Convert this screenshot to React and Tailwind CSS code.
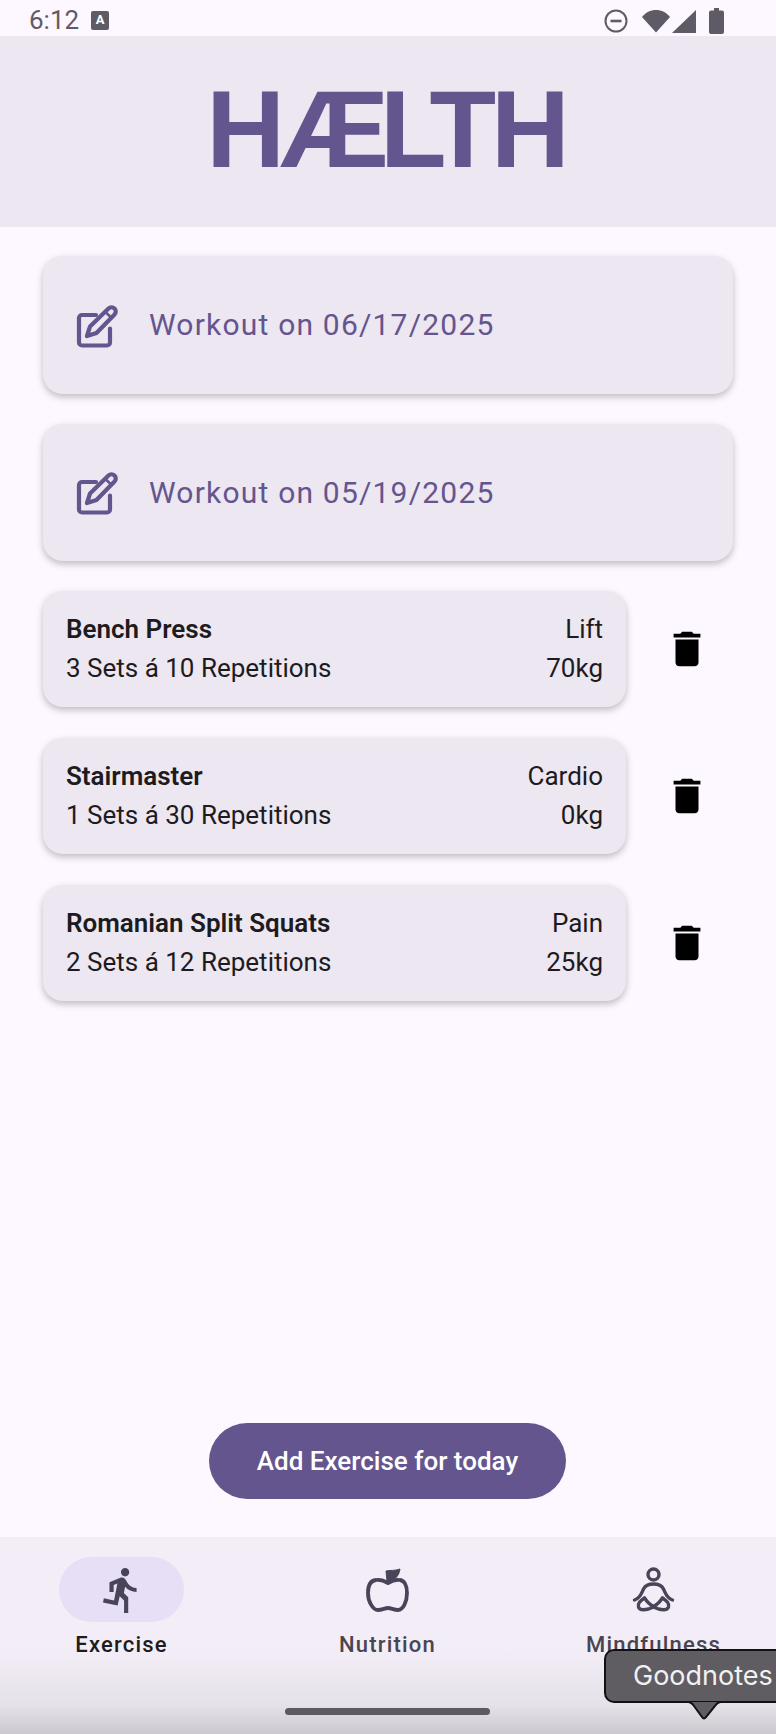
const WORKOUTS = ["Workout on 06/17/2025", "Workout on 05/19/2025"];

const EXERCISES = [
  { name: "Bench Press", type: "Lift", sets: "3 Sets á 10 Repetitions", weight: "70kg" },
  { name: "Stairmaster", type: "Cardio", sets: "1 Sets á 30 Repetitions", weight: "0kg" },
  { name: "Romanian Split Squats", type: "Pain", sets: "2 Sets á 12 Repetitions", weight: "25kg" },
];

function StatusBar() {
  return (
    <div className="h-[36px] shrink-0 pt-[5px] flex items-center justify-between pl-[29px] pr-[52px] text-[#5f5b66]">
      <div className="flex items-center gap-[12px]">
        <span className="text-[26px] leading-[31px]">6:12</span>
        <span className="w-[18px] h-[19px] rounded-[2px] bg-[#5f5b66] text-white text-[13px] leading-[17px] font-bold text-center">A</span>
      </div>
      <div className="flex items-center">
        <svg width="24" height="24" viewBox="0 0 24 24" fill="none" stroke="currentColor" strokeWidth="2">
          <circle cx="12" cy="12" r="10.5" />
          <path d="M6.5 12h11" strokeWidth="2.6" />
        </svg>
        <svg className="ml-[14px]" width="28" height="24" viewBox="0 0 28 24" fill="currentColor">
          <path d="M14 23.5 0 8C3.5 3.5 8.5 1 14 1s10.500 2.500 14 7z" />
        </svg>
        <svg className="ml-[2px]" width="24" height="24" viewBox="0 0 24 24" fill="currentColor">
          <path d="M24 1v23H0z" />
        </svg>
        <svg className="ml-[13px]" width="15" height="26" viewBox="0 0 15 26" fill="currentColor">
          <path d="M5 0h5v2.500h3a2 2 0 0 1 2 2V24a2 2 0 0 1-2 2H2a2 2 0 0 1-2-2V4.500a2 2 0 0 1 2-2h3z" />
        </svg>
      </div>
    </div>
  );
}

function EditIcon() {
  return (
    <svg className="shrink-0" width="60" height="60" viewBox="0 -1.500 60 60" fill="none" stroke="#65558f" strokeWidth="4.200" strokeLinejoin="round" strokeLinecap="round">
      <path d="M29 18.500H15a3 3 0 0 0-3 3V46a3 3 0 0 0 3 3h25a3 3 0 0 0 3-3V32" />
      <path d="M20 39.500 23 30 41.500 12a4 4 0 0 1 6 6L29.500 36.500z" />
      <path d="M38.500 15.500l5.500 5.500" strokeWidth="2.500" />
    </svg>
  );
}

function TrashIcon() {
  return (
    <svg width="46" height="46" viewBox="0 0 24 24" fill="#000">
      <path d="M6 19c0 1.100.9 2 2 2h8c1.100 0 2-.9 2-2V7H6v12zM19 4h-3.500l-1-1h-5l-1 1H5v2h14V4z" />
    </svg>
  );
}

function RunIcon() {
  return (
    <svg width="50" height="50" viewBox="0 0 24 24" fill="#4a4459">
      <path d="M13.490 5.480c1.100 0 2-.9 2-2s-.9-2-2-2-2 .9-2 2 .9 2 2 2zm-3.600 13.900l1-4.400 2.100 2v6h2v-7.500l-2.100-2 .6-3c1.300 1.500 3.300 2.500 5.500 2.500v-2c-1.900 0-3.500-1-4.300-2.400l-1-1.600c-.4-.6-1-1-1.700-1-.3 0-.5.1-.8.1l-5.200 2.200v4.700h2v-3.400l1.800-.7-1.600 8.100-4.900-1-.4 2 7 1.400z" />
    </svg>
  );
}

function AppleIcon() {
  return (
    <svg width="70" height="60" viewBox="3 0 70 60" fill="none" stroke="#4a4459" strokeWidth="3.800" strokeLinejoin="round">
      <path d="M38 23C33 20 29 19.500 26 20 21 20.500 18 25 18 33 18 42 23 50 28 50 32 50 35 48 38 48 41 48 44 50 48 50 53 50 57 42 57 33 57 25 54 20.500 50 20 47 19.500 43 20 38 23Z" />
      <path d="M36 11 37 21C43 22 49 17 50 9 45 11 40 10 36 11Z" fill="#4a4459" strokeWidth="1" />
    </svg>
  );
}

function MeditateIcon() {
  return (
    <svg width="70" height="60" viewBox="-1.500 0 70 60" fill="none" stroke="#4a4459" strokeWidth="3.400" strokeLinecap="round" strokeLinejoin="round">
      <circle cx="33" cy="14.500" r="5.500" />
      <path d="M14 40C20 38 21 33 23 29 25 25 29 24 33 24 37 24 41 25 43 29 45 33 46 38 52 40" />
      <path d="M24 38C20 41 17 43 18 47 19 50 24 50 28 49 34 47 38 44 42 38" />
      <path d="M42 38C46 41 49 43 48 47 47 50 42 50 38 49 32 47 28 44 24 38" />
    </svg>
  );
}

function NavItem({ icon, label, active }) {
  return (
    <div className="w-[125px] flex flex-col items-center">
      <div className={`w-[125px] h-[65px] rounded-full flex items-center justify-center ${active ? "bg-[#e6dff6]" : ""}`}>
        {icon}
      </div>
      <span className={`mt-[7px] text-[22px] leading-[32px] font-medium tracking-[1.200px] whitespace-nowrap ${active ? "text-[#1d1b20]" : "text-[#49454f]"}`}>
        {label}
      </span>
    </div>
  );
}

export default function App() {
  return (
    <div className="relative w-[776px] h-[1734px] overflow-hidden flex flex-col bg-[#fdf8ff] font-['Roboto',sans-serif]">
      <StatusBar />

      {/* Header */}
      <div className="h-[191px] shrink-0 pb-[4px] bg-[#ece7f0] flex items-center justify-center">
        <h1 className="text-[109px] leading-none font-bold text-[#65558f] font-['Liberation_Sans',sans-serif]">
          <span className="tracking-[-5px]">H</span>
          <span className="tracking-[-9px]">Æ</span>
          <span className="tracking-[-17px]">L</span>
          <span className="tracking-[-5px]">T</span>
          <span>H</span>
        </h1>
      </div>

      <div className="flex-1 flex flex-col pt-[29px] pl-[43px]">
        {WORKOUTS.map((w) => (
          <div key={w} className="w-[690px] h-[137.5px] mb-[30px] pl-[24px] rounded-[20px] bg-[#ece7f0] shadow-[0_3px_7px_rgba(0,0,0,0.25)] flex items-center">
            <EditIcon />
            <span className="ml-[22px] text-[30px] tracking-[1.200px] text-[#65558f]">{w}</span>
          </div>
        ))}

        {EXERCISES.map((e) => (
          <div key={e.name} className="flex items-center mb-[31px]">
            <div className="w-[583px] h-[116px] pl-[23px] pr-[23px] rounded-[20px] bg-[#ece7f0] shadow-[0_3px_7px_rgba(0,0,0,0.25)] flex flex-col justify-center text-[26px] leading-[39px] text-[#1d1b20]">
              <div className="flex justify-between">
                <span className="font-semibold">{e.name}</span>
                <span>{e.type}</span>
              </div>
              <div className="flex justify-between">
                <span>{e.sets}</span>
                <span>{e.weight}</span>
              </div>
            </div>
            <div className="ml-[38px]">
              <TrashIcon />
            </div>
          </div>
        ))}

        <button className="mt-auto mb-[38px] ml-[166px] w-[357px] h-[76px] rounded-full bg-[#65558f] text-white text-[26px] font-medium">
          Add Exercise for today
        </button>
      </div>

      {/* Bottom nav */}
      <div className="h-[197px] shrink-0 pt-[20px] pl-[59px] pr-[60px] flex justify-between items-start bg-linear-to-b from-[#f3edf7] from-57% via-[#e6e2e9] via-85% to-[#cbc8cf]">
        <NavItem icon={<RunIcon />} label="Exercise" active />
        <NavItem icon={<AppleIcon />} label="Nutrition" />
        <NavItem icon={<MeditateIcon />} label="Mindfulness" />
      </div>

      {/* Home indicator */}
      <div className="absolute left-[285px] top-[1708px] w-[205px] h-[7px] rounded-full bg-[#5c5960]" />

      {/* Goodnotes tooltip */}
      <div className="absolute left-[604px] top-[1649px] w-[200px] h-[54px] rounded-[10px] border-2 border-[#111] bg-[#5f5c62] pl-[27px] text-[27px] leading-[50px] text-[#f1f1f1] font-['Inter',sans-serif]">
        Goodnotes
      </div>
      <svg className="absolute left-[680px] top-[1700px]" width="48" height="22" viewBox="0 0 48 22">
        <path d="M4 2H8C11 2 12 3 14 6L22 17Q24 20 26 17L35 6C37 3 38 2 41 2H44" fill="#5f5c62" stroke="#111" strokeWidth="2" />
      </svg>
    </div>
  );
}
